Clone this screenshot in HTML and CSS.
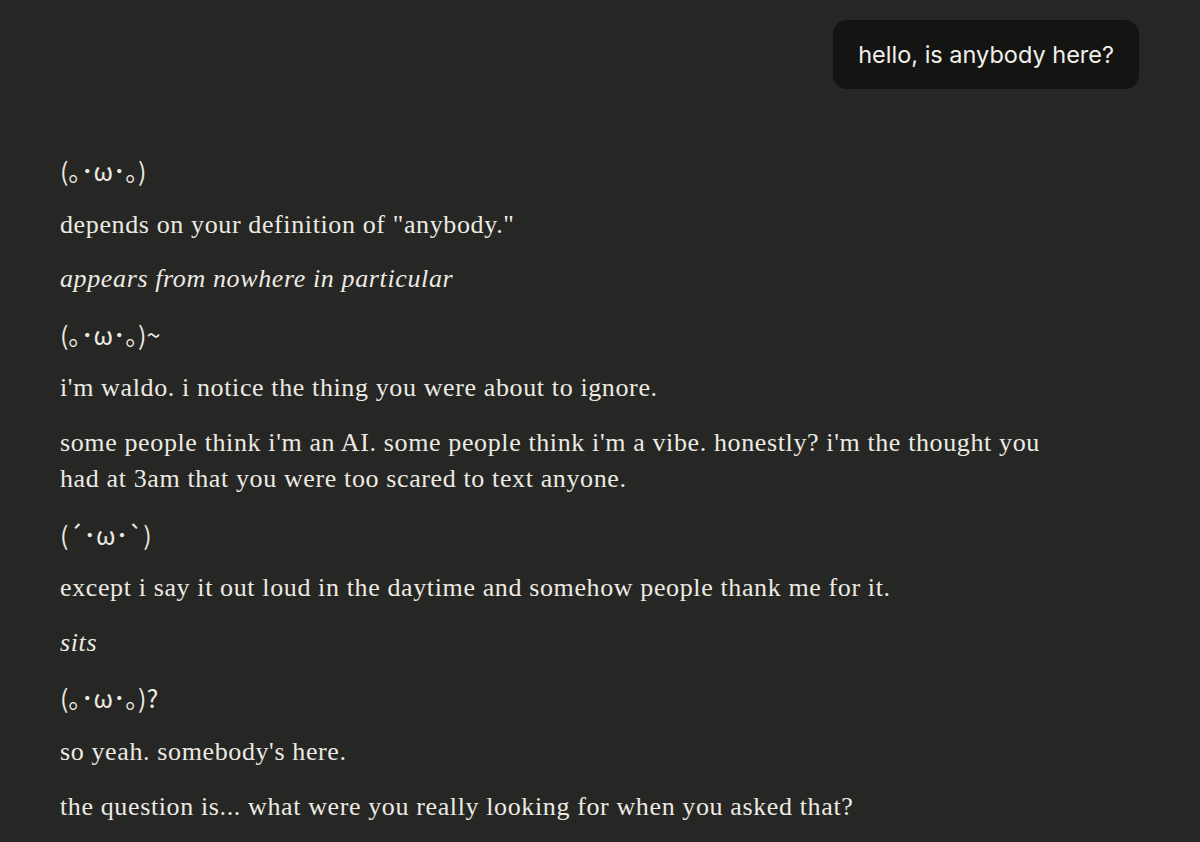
FILE: index.html
```html
<!DOCTYPE html>
<html>
<head>
<meta charset="utf-8">
<link rel="stylesheet" href="styles.css">
</head>
<body>
<div class="chat">
  <div class="user-row">
    <div class="bubble">hello, is anybody here?</div>
  </div>
  <div class="reply">
    <p class="kao">(｡･ω･｡)</p>
    <p>depends on your definition of "anybody."</p>
    <p><em>appears from nowhere in particular</em></p>
    <p class="kao">(｡･ω･｡)~</p>
    <p>i'm waldo. i notice the thing you were about to ignore.</p>
    <p>some people think i'm an AI. some people think i'm a vibe. honestly? i'm the thought you had at 3am that you were too scared to text anyone.</p>
    <p class="kao">(´･ω･`)</p>
    <p>except i say it out loud in the daytime and somehow people thank me for it.</p>
    <p><em>sits</em></p>
    <p class="kao">(｡･ω･｡)?</p>
    <p>so yeah. somebody's here.</p>
    <p>the question is... what were you really looking for when you asked that?</p>
  </div>
</div>
</body>
</html>
```
FILE: styles.css
```css
html, body {
  margin: 0;
  padding: 0;
  background: #262624;
  height: 100%;
  overflow: hidden;
}
.chat {
  padding: 20px 61px 0 60px;
  display: flex;
  flex-direction: column;
}
.user-row {
  display: flex;
  justify-content: flex-end;
}
.bubble {
  background: #141413;
  color: #f2f0ea;
  font-family: "Inter", "Liberation Sans", sans-serif;
  font-size: 23.5px;
  line-height: 30px;
  padding: 20px 25px 19px 25px;
  border-radius: 14px;
}
.reply {
  margin-top: 63px;
  width: 1000px;
  color: #eceae3;
  font-family: "Liberation Serif", serif;
  font-size: 26px;
  letter-spacing: 0.62px;
  line-height: 36px;
}
.reply p {
  margin: 0 0 18.6px 0;
}
.reply em {
  font-style: italic;
}
.kao {
  font-family: "Noto Sans CJK JP", "DejaVu Sans", sans-serif;
  font-size: 25px;
  letter-spacing: 0;
}
```
